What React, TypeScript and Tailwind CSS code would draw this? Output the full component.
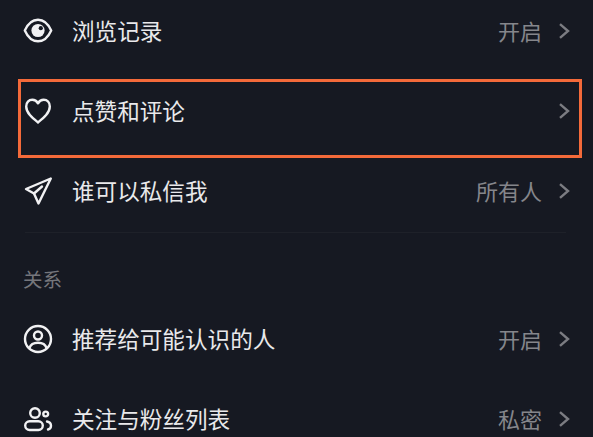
const font = "[font-family:'Noto_Sans_CJK_SC','Noto_Sans',sans-serif]";

const Eye = () => (
  <svg width="30" height="30" viewBox="0 0 30 30" fill="none" stroke="#f1f1f3" strokeWidth="2.400" className="-translate-y-[0.5px]">
    <path d="M1.800 15C4.800 8.300 9.500 4.200 15 4.200S25.200 8.300 28.200 15C25.200 21.700 20.500 25.800 15 25.800S4.800 21.700 1.800 15Z" strokeLinejoin="round" />
    <circle cx="15" cy="15" r="6.600" fill="#f1f1f3" stroke="none" />
    <circle cx="17.800" cy="12.700" r="2.100" fill="#161922" stroke="none" />
  </svg>
);
const Heart = () => (
  <svg width="30" height="30" viewBox="0 0 30 30" fill="none" stroke="#f1f1f3" strokeWidth="2.400" strokeLinejoin="round">
    <path d="M15 26.500C9.500 22 3.200 17 3.200 10.500C3.200 6.500 5.800 3.800 9.300 3.800C11.600 3.800 13.700 5 15 7.300C16.300 5 18.400 3.800 20.700 3.800C24.200 3.800 26.800 6.500 26.800 10.500C26.800 17 20.500 22 15 26.500Z" />
  </svg>
);
const Send = () => (
  <svg width="30" height="30" viewBox="0 0 30 30" fill="none" stroke="#f1f1f3" strokeWidth="2.400" strokeLinejoin="round" strokeLinecap="round">
    <path d="M27.800 2.500L3 13L11 17.500L15.500 27.500L27.800 2.500Z" />
    <path d="M11 17.500L19 10.500" />
  </svg>
);
const Person = () => (
  <svg width="30" height="30" viewBox="0 0 30 30" fill="none" stroke="#f1f1f3" strokeWidth="2.400" strokeLinecap="round">
    <circle cx="15" cy="15" r="13" />
    <circle cx="15" cy="11.500" r="4" />
    <path d="M6.500 24C7.500 20.500 10 18.800 15 18.800S22.500 20.500 23.500 24" />
  </svg>
);
const People = () => (
  <svg width="30" height="30" viewBox="0 0 30 30" fill="none" stroke="#f1f1f3" strokeWidth="2.400" strokeLinecap="round">
    <circle cx="12" cy="9" r="4.800" />
    <rect x="2.200" y="17.200" width="17.600" height="8.800" rx="4.400" />
    <circle cx="22.700" cy="10" r="2.400" />
    <path d="M24 17.500C27 18 28 20 28 21.800C28 23.600 27 25 25 25.500" />
  </svg>
);
const Chevron = () => (
  <svg width="12" height="18" viewBox="0 0 12 18" fill="none" stroke="#7b7c82" strokeWidth="2.400" className="ml-[16px] mr-[23px] -translate-y-[1px]">
    <path d="M2 2.200L10 9L2 15.800" />
  </svg>
);

function Row({ icon, label, value }: { icon: React.ReactNode; label: string; value?: string }) {
  return (
    <div className="flex h-20 items-center pl-[23px]">
      <div className="w-[30px] shrink-0 -translate-y-[1px]">{icon}</div>
      <span className="mb-[2px] ml-[19px] text-[22.6px] leading-none text-[#e9e9eb]">{label}</span>
      <span className="mb-[4px] ml-auto text-[22px] leading-none text-[#85868b]">{value}</span>
      <Chevron />
    </div>
  );
}

export default function App() {
  return (
    <div className={`relative h-[437px] w-[593px] overflow-hidden bg-[#161922] ${font}`}>
      <div className="-mt-2">
        <Row icon={<Eye />} label="浏览记录" value="开启" />
        <div className="relative">
          <Row icon={<Heart />} label="点赞和评论" />
          <div className="absolute left-[18px] top-[7px] h-[79px] w-[564px] border-[3px] border-[#f46a3a]" />
        </div>
        <Row icon={<Send />} label="谁可以私信我" value="所有人" />
        <div className="ml-[25px] mr-[27px] border-t border-[#1e2129]" />
        <div className="flex h-[67px] items-end pl-[23px] pb-[12px] text-[19.5px] leading-none text-[#75767c]">关系</div>
        <Row icon={<Person />} label="推荐给可能认识的人" value="开启" />
        <Row icon={<People />} label="关注与粉丝列表" value="私密" />
      </div>
    </div>
  );
}
